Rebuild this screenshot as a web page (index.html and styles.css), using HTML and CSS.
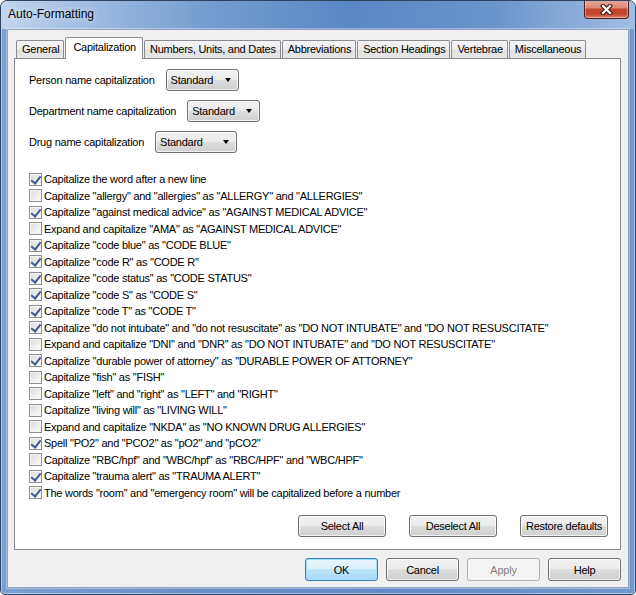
FILE: index.html
```html
<!DOCTYPE html>
<html lang="en">
<head>
    <meta charset="UTF-8">
    <title>Auto-Formatting</title>
    <link rel="stylesheet" href="styles.css">
</head>
<body>
    <div class="window">
        <div class="titlebar">
            <span class="title">Auto-Formatting</span>
            <button class="close-btn" aria-label="Close">
                <svg width="13" height="11" viewBox="0 0 13 11">
                    <path d="M3 2 L10 9 M10 2 L3 9" stroke="#3b1c17" stroke-width="4.4" stroke-linecap="square"/>
                    <path d="M3 2 L10 9 M10 2 L3 9" stroke="#fff" stroke-width="2.2" stroke-linecap="square"/>
                </svg>
            </button>
        </div>

        <div class="client">
            <div class="tabs">
                <div class="tab">General</div>
                <div class="tab active">Capitalization</div>
                <div class="tab">Numbers, Units, and Dates</div>
                <div class="tab">Abbreviations</div>
                <div class="tab">Section Headings</div>
                <div class="tab">Vertebrae</div>
                <div class="tab">Miscellaneous</div>
            </div>

            <div class="panel">
                <div class="select-row">
                    <label>Person name capitalization</label>
                    <div class="combo"><span>Standard</span><i class="arrow"></i></div>
                </div>
                <div class="select-row">
                    <label>Department name capitalization</label>
                    <div class="combo"><span>Standard</span><i class="arrow"></i></div>
                </div>
                <div class="select-row">
                    <label>Drug name capitalization</label>
                    <div class="combo wide"><span>Standard</span><i class="arrow"></i></div>
                </div>

                <ul class="checks">
                    <li><span class="box checked"></span>Capitalize the word after a new line</li>
                    <li><span class="box"></span>Capitalize "allergy" and "allergies" as "ALLERGY" and "ALLERGIES"</li>
                    <li><span class="box checked"></span>Capitalize "against medical advice" as "AGAINST MEDICAL ADVICE"</li>
                    <li><span class="box"></span>Expand and capitalize "AMA" as "AGAINST MEDICAL ADVICE"</li>
                    <li><span class="box checked"></span>Capitalize "code blue" as "CODE BLUE"</li>
                    <li><span class="box checked"></span>Capitalize "code R" as "CODE R"</li>
                    <li><span class="box checked"></span>Capitalize "code status" as "CODE STATUS"</li>
                    <li><span class="box checked"></span>Capitalize "code S" as "CODE S"</li>
                    <li><span class="box checked"></span>Capitalize "code T" as "CODE T"</li>
                    <li><span class="box checked"></span>Capitalize "do not intubate" and "do not resuscitate" as "DO NOT INTUBATE" and "DO NOT RESUSCITATE"</li>
                    <li><span class="box"></span>Expand and capitalize "DNI" and "DNR" as "DO NOT INTUBATE" and "DO NOT RESUSCITATE"</li>
                    <li><span class="box checked"></span>Capitalize "durable power of attorney" as "DURABLE POWER OF ATTORNEY"</li>
                    <li><span class="box"></span>Capitalize "fish" as "FISH"</li>
                    <li><span class="box"></span>Capitalize "left" and "right" as "LEFT" and "RIGHT"</li>
                    <li><span class="box"></span>Capitalize "living will" as "LIVING WILL"</li>
                    <li><span class="box"></span>Expand and capitalize "NKDA" as "NO KNOWN DRUG ALLERGIES"</li>
                    <li><span class="box checked"></span>Spell "PO2" and "PCO2" as "pO2" and "pCO2"</li>
                    <li><span class="box"></span>Capitalize "RBC/hpf" and "WBC/hpf" as "RBC/HPF" and "WBC/HPF"</li>
                    <li><span class="box checked"></span>Capitalize "trauma alert" as "TRAUMA ALERT"</li>
                    <li><span class="box checked"></span>The words "room" and "emergency room" will be capitalized before a number</li>
                </ul>

                <div class="panel-buttons">
                    <button class="btn">Select All</button>
                    <button class="btn">Deselect All</button>
                    <button class="btn">Restore defaults</button>
                </div>
            </div>

            <div class="dialog-buttons">
                <button class="btn default">OK</button>
                <button class="btn">Cancel</button>
                <button class="btn" disabled>Apply</button>
                <button class="btn">Help</button>
            </div>
        </div>
    </div>
</body>
</html>
```

FILE: styles.css
```css
* {
  box-sizing: border-box;
}

body {
  margin: 0;
  background: #fff;
  font-family: "Liberation Sans", Arial, sans-serif;
  font-size: 11px;
  letter-spacing: -0.25px;
  color: #000;
}

/* Window frame */
.window {
  width: 636px;
  height: 595px;
  border: 1px solid #2f4260;
  border-radius: 7px 7px 5px 5px;
  background: linear-gradient(to right, #7aa0d3 0%, #6890c9 30%, #5f8ac7 60%, #7199cf 100%);
  box-shadow: inset 0 0 0 1px rgba(255, 255, 255, 0.45);
  display: flex;
  flex-direction: column;
  overflow: hidden;
}

/* Title bar */
.titlebar {
  height: 28px;
  display: flex;
  justify-content: space-between;
  align-items: flex-start;
  padding-left: 7px;
  background: linear-gradient(to right, #c1d5ed 0%, #a3bfe3 12%, #769dd1 32%, #5b87c5 55%, #6b94cc 78%, #a2bee4 100%);
}

.title {
  font-size: 12px;
  letter-spacing: 0;
  padding-top: 6px;
  text-shadow: 0 0 6px rgba(255, 255, 255, 0.8);
}

.close-btn {
  width: 45px;
  height: 19px;
  margin: -1px 6px 0 0;
  padding: 0;
  border: 1px solid #4b241d;
  border-top: none;
  border-radius: 0 0 4px 4px;
  background: linear-gradient(#e7ab9b 0%, #dc8b78 42%, #c7442f 52%, #c4432f 78%, #db8670 100%);
  box-shadow: inset 0 0 0 1px rgba(255, 255, 255, 0.35);
  display: flex;
  align-items: center;
  justify-content: center;
}

/* Client area */
.client {
  flex: 1;
  margin: 0 6px 6px 6px;
  border: 1px solid #8ea3c0;
  box-shadow: 0 0 0 1px rgba(255, 255, 255, 0.35);
  background: #f0f0f0;
  padding: 7px 7px 6px 6px;
  display: flex;
  flex-direction: column;
}

/* Tabs */
.tabs {
  height: 21px;
  display: flex;
  align-items: flex-end;
  gap: 1px;
  padding-left: 2px;
}

.tab {
  height: 18px;
  padding: 0 4px 0 5px;
  border: 1px solid #898c95;
  border-bottom: none;
  border-radius: 2px 2px 0 0;
  background: linear-gradient(#f4f4f4 0%, #ececec 50%, #e0e0e0 51%, #e6e6e6 100%);
  line-height: 16px;
  white-space: nowrap;
}

.tab.active {
  position: relative;
  z-index: 1;
  height: 22px;
  margin-bottom: -1px;
  padding: 0 6px 0 7px;
  background: #fff;
  line-height: 18px;
}

/* Tab page */
.panel {
  height: 492px;
  border: 1px solid #898c95;
  background: #fff;
  padding: 10px 12px 12px 14px;
  display: flex;
  flex-direction: column;
}

.select-row {
  height: 22px;
  margin-bottom: 9px;
  display: flex;
  align-items: center;
}

.select-row label {
  margin-right: 11px;
}

.combo {
  width: 73px;
  height: 22px;
  border: 1px solid #707070;
  border-radius: 3px;
  background: linear-gradient(#f2f2f2 0%, #ebebeb 49%, #dddddd 50%, #cfcfcf 100%);
  box-shadow: inset 0 0 0 1px rgba(255, 255, 255, 0.7);
  padding: 0 7px 0 4px;
  display: flex;
  align-items: center;
  justify-content: space-between;
}

.combo.wide {
  width: 82px;
}

.arrow {
  width: 0;
  height: 0;
  border-left: 3.5px solid transparent;
  border-right: 3.5px solid transparent;
  border-top: 4px solid #000;
}

/* Checkbox list */
.checks {
  list-style: none;
  margin: 9px 0 0;
  padding: 0;
}

.checks li {
  height: 16.5px;
  display: flex;
  align-items: center;
  white-space: nowrap;
}

.box {
  position: relative;
  flex: none;
  width: 13px;
  height: 13px;
  margin-right: 2px;
  border: 1px solid #8e8f8f;
  background: linear-gradient(135deg, #d9d9d9 0%, #f0f0f0 60%, #fbfbfb 100%);
  box-shadow: inset 0 0 0 1px #f6f6f6;
}

.box.checked::after {
  content: "";
  position: absolute;
  left: 3px;
  top: 0px;
  width: 4px;
  height: 8px;
  border: solid #3f5890;
  border-width: 0 2px 2px 0;
  transform: rotate(38deg);
}

/* Buttons */
.btn {
  width: 88px;
  height: 22px;
  padding: 0;
  border: 1px solid #707070;
  border-radius: 3px;
  background: linear-gradient(#f2f2f2 0%, #ebebeb 49%, #dddddd 50%, #cfcfcf 100%);
  box-shadow: inset 0 0 0 1px rgba(255, 255, 255, 0.7);
  font: inherit;
  letter-spacing: inherit;
  color: #000;
}

.btn.default {
  border-color: #3c7fb1;
  background: linear-gradient(#eaf6fd 0%, #d9f0fc 49%, #bee6fd 50%, #a7d9f5 100%);
  box-shadow: inset 0 0 0 1px #9fdcf8;
}

.btn:disabled {
  border-color: #adb2b5;
  background: #f4f4f4;
  box-shadow: none;
  color: #838383;
}

.panel-buttons {
  margin-top: auto;
  display: flex;
  justify-content: flex-end;
  gap: 23px;
}

.dialog-buttons {
  margin-top: 8px;
  display: flex;
  justify-content: flex-end;
  gap: 8px;
}

.dialog-buttons .btn {
  width: 73px;
  height: 23px;
}
```
